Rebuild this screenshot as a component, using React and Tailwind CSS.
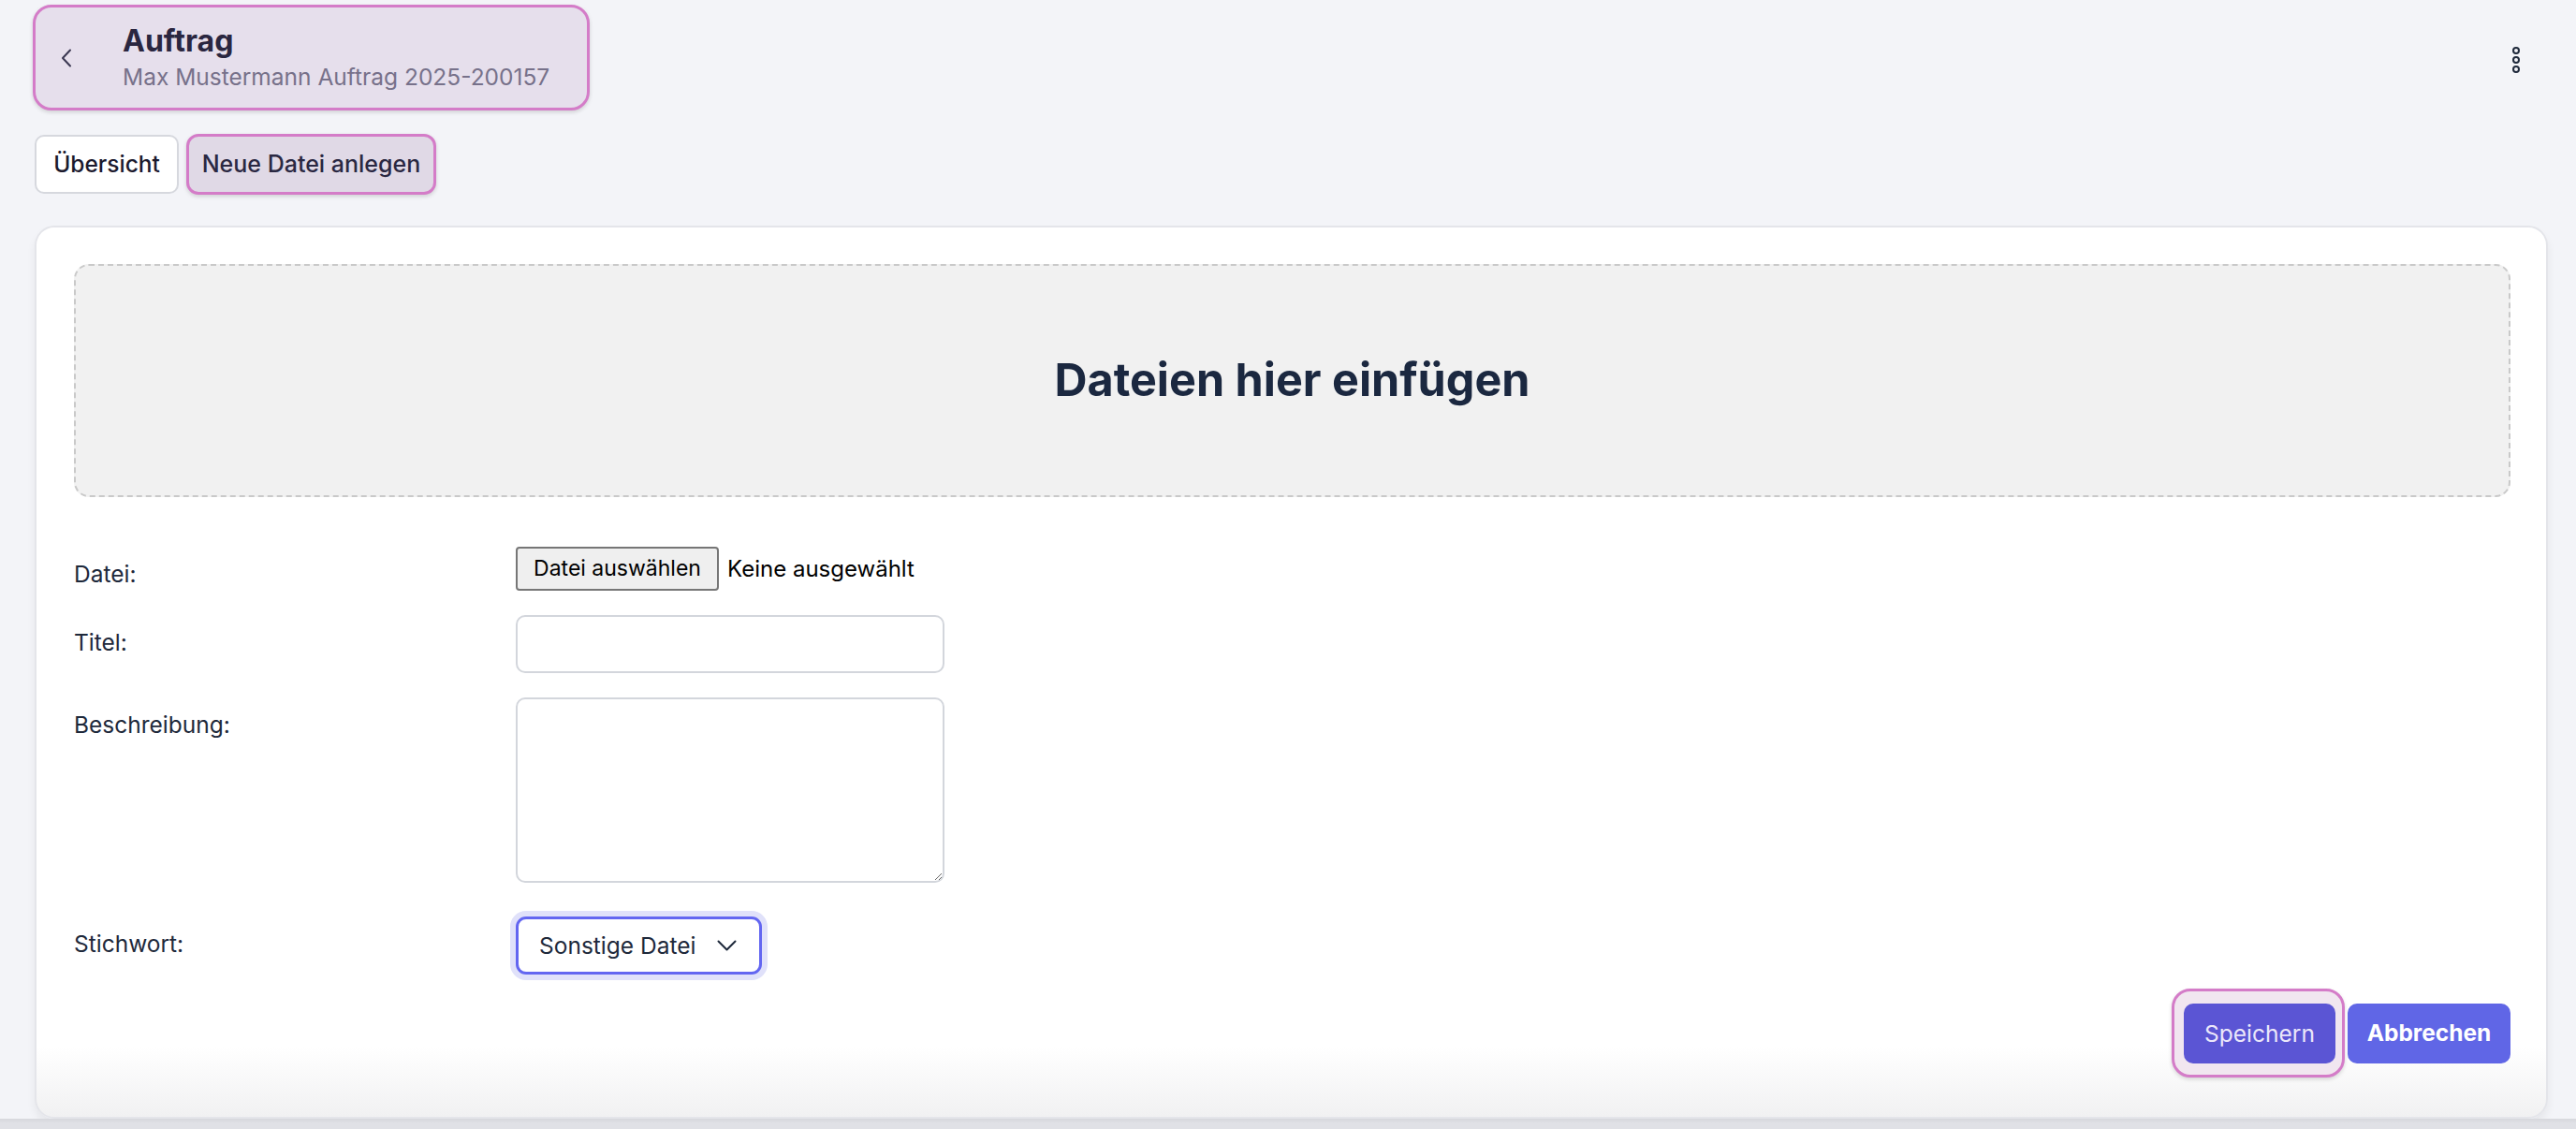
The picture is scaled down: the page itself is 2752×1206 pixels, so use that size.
import { useState } from "react";

function ChevronLeft() {
  return (
    <svg width="12" height="20" viewBox="0 0 12 20" fill="none" aria-hidden="true">
      <path d="M10 1.5 L2 10 L10 18.5" stroke="#3b3852" strokeWidth="2" strokeLinecap="round" strokeLinejoin="round" />
    </svg>
  );
}

function Kebab() {
  return (
    <svg width="14" height="34" viewBox="0 0 14 34" fill="none" aria-hidden="true">
      <circle cx="7" cy="7" r="3" stroke="#1e293b" strokeWidth="2" />
      <circle cx="7" cy="17" r="3" stroke="#1e293b" strokeWidth="2" />
      <circle cx="7" cy="27" r="3" stroke="#1e293b" strokeWidth="2" />
    </svg>
  );
}

function ChevronDown() {
  return (
    <svg width="21" height="12" viewBox="0 0 21 12" fill="none" aria-hidden="true">
      <path d="M1.5 1.5 L10.5 10.5 L19.5 1.5" stroke="#1e293b" strokeWidth="2" strokeLinecap="round" strokeLinejoin="round" />
    </svg>
  );
}

function Row({ label, children, className = "" }) {
  return (
    <div className={`flex items-start ${className}`}>
      <div className="w-[472px] shrink-0 pt-[11px] text-[24.5px] leading-[36px] text-[#1e293b]">
        {label}
      </div>
      {children}
    </div>
  );
}

export default function App() {
  const [title, setTitle] = useState("");
  const [desc, setDesc] = useState("");

  return (
    <div className="min-h-screen bg-[#f3f4f8] font-['Inter',sans-serif] text-[#1e293b] flex flex-col">
      <div className="flex-1 pl-[35px] pr-[30px] pt-[5px]">
        {/* ── Header ── */}
        <div className="flex items-start justify-between">
          <div className="flex items-center h-[113px] w-[595px] rounded-[20px] border-[3px] border-[#d47cc8] bg-[#e6dfec] shadow-[0_2px_4px_rgba(0,0,0,0.15)]">
            <div className="ml-[27px] flex items-center">
              <ChevronLeft />
            </div>
            <div className="ml-[54px] flex flex-col">
              <span className="text-[32px] leading-[40px] font-bold text-[#2a2640]">Auftrag</span>
              <span className="text-[24.5px] leading-[36px] text-[#77718a]">
                Max Mustermann Auftrag 2025-200157
              </span>
            </div>
          </div>
          <button className="mt-[42px] mr-[27px]" aria-label="Mehr">
            <Kebab />
          </button>
        </div>

        {/* ── Tabs ── */}
        <div className="flex items-center gap-[8px] ml-[2px] mt-[25px]">
          <button className="h-[63px] w-[154px] rounded-[10px] border-2 border-[#d6d8de] bg-white text-[24.5px] font-medium text-[#1c1a2e]">
            Übersicht
          </button>
          <button className="h-[65px] w-[267px] rounded-[13px] border-[3px] border-[#d47cc8] bg-[#e0d9e6] text-[25px] font-medium text-[#2a2842] shadow-[0_2px_4px_rgba(0,0,0,0.15)]">
            Neue Datei anlegen
          </button>
        </div>

        {/* ── Card ── */}
        <div className="ml-[2px] mt-[33px] rounded-[21px] border-2 border-[#e4e5ea] bg-[linear-gradient(to_bottom,#ffffff_calc(100%-75px),#f1f1f2)] pl-[40px] pr-[38px] pt-[39px] pb-[42px] shadow-[0_6px_10px_rgba(0,0,0,0.06)]">
          <div className="flex h-[249px] items-center justify-center rounded-[16px] border-2 border-dashed border-[#c9c9c9] bg-[#f1f1f1]">
            <span className="text-[48.5px] font-bold text-[#1b2840]">Dateien hier einfügen</span>
          </div>

          <div className="mt-[53px]">
            <Row label="Datei:">
              <div className="flex items-center">
                <span className="flex h-[47px] w-[217px] items-center justify-center rounded-[4px] border-2 border-[#767676] bg-[#efefef] text-[23px] text-black">
                  Datei auswählen
                </span>
                <span className="ml-[9px] text-[24px] text-black">Keine ausgewählt</span>
              </div>
            </Row>

            <Row label="Titel:" className="mt-[26px]">
              <input
                value={title}
                onChange={(e) => setTitle(e.target.value)}
                className="h-[62px] w-[458px] rounded-[10px] border-2 border-[#d3d6dc] bg-white px-4 text-[24.5px] outline-none"
              />
            </Row>

            <Row label="Beschreibung:" className="mt-[26px]">
              <textarea
                value={desc}
                onChange={(e) => setDesc(e.target.value)}
                className="block h-[198px] w-[458px] rounded-[10px] border-2 border-[#d3d6dc] bg-white px-4 py-2 text-[24.5px] outline-none"
              />
            </Row>

            <Row label="Stichwort:" className="mt-[36px]">
              <div className="flex h-[62px] w-[263px] items-center justify-between rounded-[11px] border-[3px] border-[#6366f1] bg-white pl-[22px] pr-[24px] shadow-[0_0_0_6px_#e0e1fa]">
                <span className="text-[24.5px] text-[#1e293b]">Sonstige Datei</span>
                <ChevronDown />
              </div>
            </Row>
          </div>

          {/* ── Actions ── */}
          <div className="mt-[15px] flex items-center justify-end">
            <div className="rounded-[20px] border-[3px] border-[#d47cc8] bg-[#f1e6f0] pl-[10px] pr-[7px] pt-[13px] pb-[12px] shadow-[0_2px_4px_rgba(0,0,0,0.15)]">
              <button className="h-[64px] w-[162px] rounded-[10px] bg-[#5b55d4] text-[24.5px] text-[#ebe7fa]">
                Speichern
              </button>
            </div>
            <button className="ml-[3px] h-[64px] w-[174px] rounded-[10px] bg-[#6066e6] text-[24.5px] font-bold text-white">
              Abbrechen
            </button>
          </div>
        </div>
      </div>
      <div className="h-[12px] bg-[linear-gradient(to_bottom,#d6d7dc,#e0e1e6_40%)]" />
    </div>
  );
}
